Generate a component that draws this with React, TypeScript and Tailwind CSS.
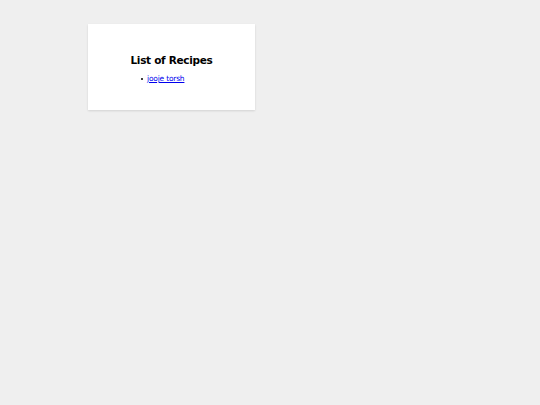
import React from 'react';

const recipes = [{ name: 'Jooje torsh', href: '#' }];

export default function App() {
  return (
    <div className="min-h-screen bg-[#efefef] pt-6 pl-[88px]" style={{ fontFamily: '"DejaVu Sans", sans-serif' }}>
      <div className="w-[167px] h-[86px] bg-white shadow-[0_1px_2px_rgba(0,0,0,0.12)] pt-[30px]">
        <h1 className="text-center text-[10.5px] font-bold leading-[12px] tracking-[-0.3px] text-black">List of Recipes</h1>
        <ul className="mt-[8px] pl-[52px] text-[7.5px] leading-[10px] tracking-[-0.2px]">
          {recipes.map(r => (
            <li key={r.name} className="flex items-center">
              <span className="w-[2.5px] h-[2.5px] rounded-full bg-black mr-[4px] ml-[0.5px]" />
              <a href={r.href} className="text-[#0000ee] underline">
                {r.name.toLowerCase()}
              </a>
            </li>
          ))}
        </ul>
      </div>
    </div>
  );
}
